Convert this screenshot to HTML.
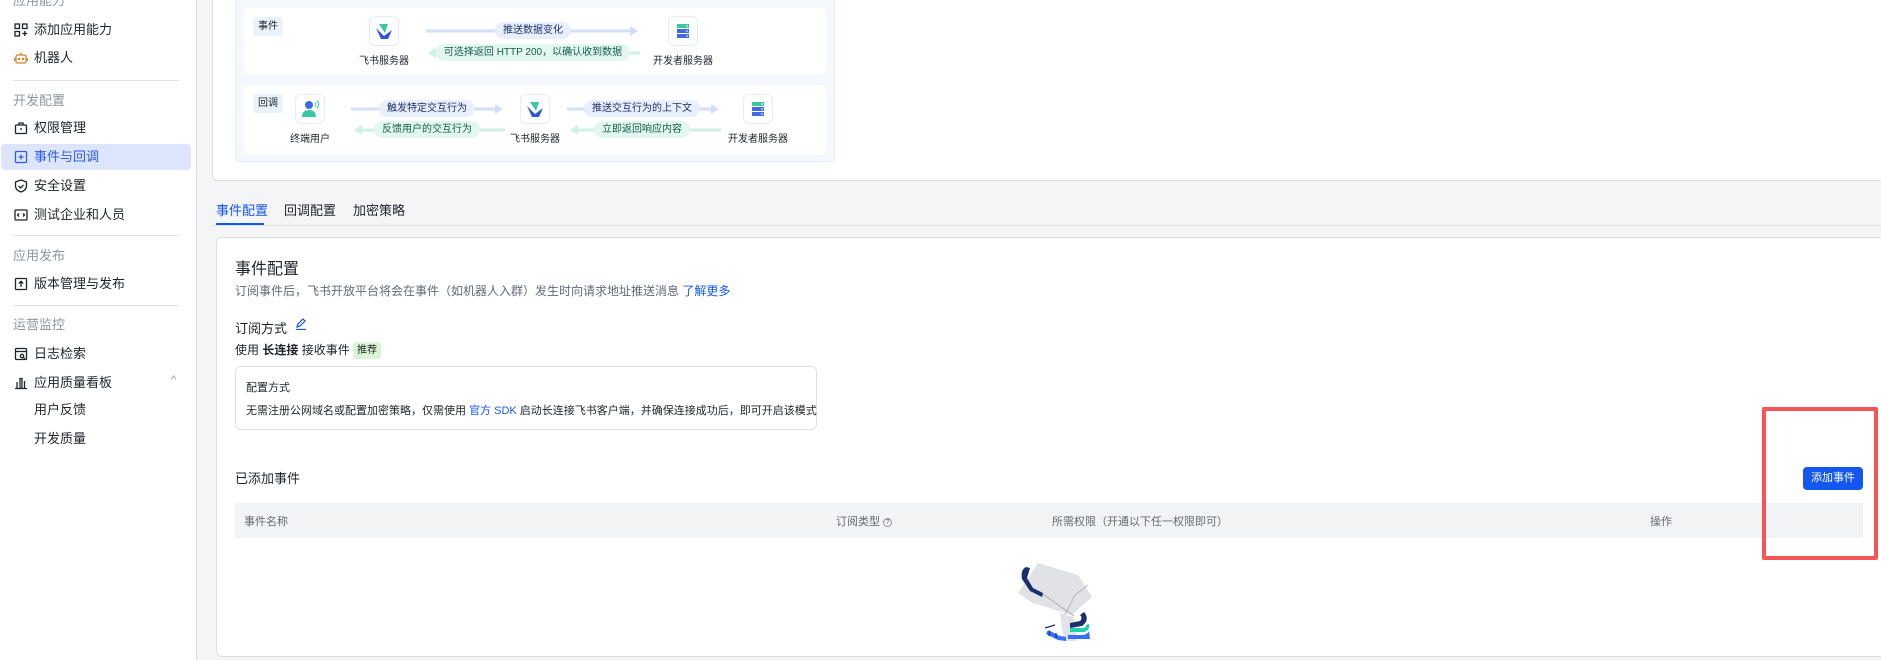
<!DOCTYPE html>
<html><head><meta charset="utf-8"><style>
*{margin:0;padding:0;box-sizing:border-box}
body{width:1881px;height:641px;overflow:hidden;background:#f4f5f7;font-family:"Liberation Sans","Noto Sans CJK SC",sans-serif;color:#1f2329;position:relative;font-size:13px}
.a{position:absolute;white-space:nowrap}
.side{position:absolute;left:0;top:0;width:197px;height:660px;background:#fff;border-right:1px solid #dee0e3}
.si{position:absolute;left:14px;width:180px;height:20px;line-height:20px;font-size:13px;color:#1f2329;white-space:nowrap}
.si svg{position:absolute;left:0;top:3px}
.si span{position:absolute;left:20px;top:0;white-space:nowrap}
.grp{position:absolute;left:13px;font-size:13px;color:#8f959e;white-space:nowrap;line-height:18px}
.sep{position:absolute;left:13px;width:166px;height:1px;background:#dee0e3}
.card{position:absolute;background:#fff;border:1px solid #dee0e3;border-radius:6px}
.lbl{position:absolute;font-size:10px;padding:0 8px;height:17px;line-height:17px;border-radius:9px;white-space:nowrap;transform:translateX(-50%)}
.lb{background:#e8efff;color:#1f2f6b}
.lg{background:#e3f7f1;color:#125c45}
.ic{position:absolute;width:30px;height:30px;background:#fff;border:1px solid #e5ebf8;border-radius:6px;transform:translate(-50%,-50%)}
.cap{position:absolute;font-size:10px;color:#1f2329;transform:translateX(-50%);white-space:nowrap}
.tag{position:absolute;font-size:10px;background:#e9f3fb;color:#1f2329;padding:0 5px;height:19px;line-height:19px;border-radius:3px}
</style></head><body>
<div class="side">
<div class="grp" style="top:-8px">应用能力</div>
<div class="si" style="top:20px"><svg width="14" height="14" viewBox="0 0 14 14" fill="none" stroke="#1f2329" stroke-width="1.3"><rect x="1" y="1" width="4.5" height="4.5"/><rect x="8.5" y="1" width="4.5" height="4.5"/><rect x="1" y="8.5" width="4.5" height="4.5"/><path d="M10.75 8v5M8.3 10.5h5"/></svg><span>添加应用能力</span></div>
<div class="si" style="top:48px"><svg width="14" height="14" viewBox="0 0 14 14" fill="none" stroke="#d4812a" stroke-width="1.3"><rect x="2" y="4" width="10" height="8" rx="1.5"/><path d="M7 1.5v2.5M0.5 7v3M13.5 7v3"/><circle cx="5" cy="8" r=".6" fill="#d4812a"/><circle cx="9" cy="8" r=".6" fill="#d4812a"/></svg><span>机器人</span></div>
<div class="sep" style="top:80px"></div>
<div class="grp" style="top:92px">开发配置</div>
<div class="si" style="top:118px"><svg width="14" height="14" viewBox="0 0 14 14" fill="none" stroke="#1f2329" stroke-width="1.3"><rect x="1.5" y="4" width="11" height="8.5" rx="1"/><path d="M5 4V2h4v2M7 7v2"/></svg><span>权限管理</span></div>
<div style="position:absolute;left:1px;top:144px;width:190px;height:26px;background:#dce5fc;border-radius:4px"></div>
<div class="si" style="top:147px;color:#2e5bec"><svg width="14" height="14" viewBox="0 0 14 14" fill="none" stroke="#2e5bec" stroke-width="1.3"><rect x="1.5" y="1.5" width="11" height="11" rx="1"/><path d="M7 4.5v5M4.5 7h5"/></svg><span>事件与回调</span></div>
<div class="si" style="top:176px"><svg width="14" height="14" viewBox="0 0 14 14" fill="none" stroke="#1f2329" stroke-width="1.3"><path d="M7 1L12.5 3v4c0 3-2.5 5-5.5 6C4 12 1.5 10 1.5 7V3z"/><path d="M4.5 7l2 2 3-3"/></svg><span>安全设置</span></div>
<div class="si" style="top:205px"><svg width="14" height="14" viewBox="0 0 14 14" fill="none" stroke="#1f2329" stroke-width="1.3"><rect x="1" y="2" width="12" height="10" rx="1"/><path d="M5 5.5L3.5 7 5 8.5M9 5.5l1.5 1.5L9 8.5"/></svg><span>测试企业和人员</span></div>
<div class="sep" style="top:235px"></div>
<div class="grp" style="top:247px">应用发布</div>
<div class="si" style="top:274px"><svg width="14" height="14" viewBox="0 0 14 14" fill="none" stroke="#1f2329" stroke-width="1.3"><rect x="1.5" y="1.5" width="11" height="11" rx="1"/><path d="M7 10V4.5M4.8 6.5L7 4.3l2.2 2.2"/></svg><span>版本管理与发布</span></div>
<div class="sep" style="top:305px"></div>
<div class="grp" style="top:316px">运营监控</div>
<div class="si" style="top:344px"><svg width="14" height="14" viewBox="0 0 14 14" fill="none" stroke="#1f2329" stroke-width="1.3"><rect x="1.5" y="1.5" width="11" height="11" rx="1"/><path d="M1.5 4.5h11"/><circle cx="8" cy="9" r="1.7"/><path d="M9.3 10.3l1.5 1.5"/></svg><span>日志检索</span></div>
<div class="si" style="top:373px"><svg width="14" height="14" viewBox="0 0 14 14" fill="none" stroke="#1f2329" stroke-width="1.3"><path d="M1 12.5h12M3 12V6M6 12V2.5h2V12M10.5 12V5"/></svg><span>应用质量看板</span></div>
<div class="a" style="left:171px;top:374px;font-size:11px;color:#8f959e">^</div>
<div class="si" style="top:400px"><span>用户反馈</span></div>
<div class="si" style="top:429px"><span>开发质量</span></div>
</div>

<!-- top card -->
<div class="card" style="left:212px;top:-10px;width:1680px;height:191px"></div>
<div style="position:absolute;left:235px;top:-4px;width:600px;height:166px;background:#f5f9fd;border:1px solid #e8edf3;border-radius:4px"></div>
<div style="position:absolute;left:244px;top:8px;width:582px;height:66px;background:#fff;border-radius:6px"></div>
<div style="position:absolute;left:244px;top:85px;width:582px;height:70px;background:#fff;border-radius:6px"></div>
<div class="tag" style="left:253px;top:17px">事件</div>
<div class="tag" style="left:253px;top:94px">回调</div>

<svg style="position:absolute;left:0;top:0" width="900" height="170">
<defs><marker id="mb" markerUnits="userSpaceOnUse" markerWidth="10" markerHeight="12" refX="2" refY="6" orient="auto"><path d="M0 1L8 6 0 11z" fill="#d3defb"/></marker>
<marker id="mg" markerUnits="userSpaceOnUse" markerWidth="10" markerHeight="12" refX="2" refY="6" orient="auto"><path d="M0 1L8 6 0 11z" fill="#cdf1e4"/></marker></defs>
<g stroke-width="3">
<line x1="426" y1="31" x2="632" y2="31" stroke="#d3defb" marker-end="url(#mb)"/>
<line x1="640" y1="53" x2="434" y2="53" stroke="#cdf1e4" marker-end="url(#mg)"/>
<line x1="351" y1="109" x2="497" y2="109" stroke="#d3defb" marker-end="url(#mb)"/>
<line x1="505" y1="130" x2="360" y2="130" stroke="#cdf1e4" marker-end="url(#mg)"/>
<line x1="567" y1="109" x2="713" y2="109" stroke="#d3defb" marker-end="url(#mb)"/>
<line x1="721" y1="130" x2="576" y2="130" stroke="#cdf1e4" marker-end="url(#mg)"/>
</g></svg>
<div class="lbl lb" style="left:533px;top:22px">推送数据变化</div>
<div class="lbl lg" style="left:533px;top:44px">可选择返回 HTTP 200，以确认收到数据</div>
<div class="lbl lb" style="left:427px;top:100px">触发特定交互行为</div>
<div class="lbl lg" style="left:427px;top:121px">反馈用户的交互行为</div>
<div class="lbl lb" style="left:642px;top:100px">推送交互行为的上下文</div>
<div class="lbl lg" style="left:642px;top:121px">立即返回响应内容</div>

<div class="ic" style="left:384px;top:31px"><svg width="28" height="28" viewBox="0 0 28 28"><path d="M9 7h9l-3 9z" fill="#3bc7a5"/><path d="M6 11l8 8 8-6-4 9H11z" fill="#2d56d6"/></svg></div>
<div class="cap" style="left:384px;top:52px">飞书服务器</div>
<div class="ic" style="left:683px;top:31px"><svg width="28" height="28" viewBox="0 0 28 28"><rect x="8" y="7" width="12" height="4" fill="#3bc7a5"/><rect x="8" y="12" width="12" height="4" fill="#3e6ae5"/><rect x="8" y="17" width="12" height="4" fill="#3e6ae5"/><path d="M17 9h2M17 14h2M17 19h2" stroke="#fff"/></svg></div>
<div class="cap" style="left:683px;top:52px">开发者服务器</div>
<div class="ic" style="left:310px;top:109px"><svg width="28" height="28" viewBox="0 0 28 28"><circle cx="13" cy="10" r="4" fill="#3e6ae5"/><path d="M6 22c0-5 3-7 7-7s7 2 7 7z" fill="#3bc7a5"/><path d="M19 7a4 4 0 010 5M21 5.5a6 6 0 010 8" stroke="#3bc7a5" fill="none"/></svg></div>
<div class="cap" style="left:310px;top:130px">终端用户</div>
<div class="ic" style="left:535px;top:109px"><svg width="28" height="28" viewBox="0 0 28 28"><path d="M9 7h9l-3 9z" fill="#3bc7a5"/><path d="M6 11l8 8 8-6-4 9H11z" fill="#2d56d6"/></svg></div>
<div class="cap" style="left:535px;top:130px">飞书服务器</div>
<div class="ic" style="left:758px;top:109px"><svg width="28" height="28" viewBox="0 0 28 28"><rect x="8" y="7" width="12" height="4" fill="#3bc7a5"/><rect x="8" y="12" width="12" height="4" fill="#3e6ae5"/><rect x="8" y="17" width="12" height="4" fill="#3e6ae5"/><path d="M17 9h2M17 14h2M17 19h2" stroke="#fff"/></svg></div>
<div class="cap" style="left:758px;top:130px">开发者服务器</div>

<!-- tabs -->
<div style="position:absolute;left:212px;top:225px;width:1669px;height:1px;background:#dee0e3"></div>
<div class="a" style="left:216px;top:200px;font-size:13px;color:#1456f0">事件配置</div>
<div style="position:absolute;left:216px;top:223px;width:48px;height:2px;background:#1456f0"></div>
<div class="a" style="left:284px;top:200px;font-size:13px">回调配置</div>
<div class="a" style="left:353px;top:200px;font-size:13px">加密策略</div>

<!-- content card -->
<div class="card" style="left:216px;top:237px;width:1680px;height:420px"></div>
<div class="a" style="left:235px;top:255px;font-size:16px">事件配置</div>
<div class="a" style="left:235px;top:282px;font-size:12px;color:#646a73">订阅事件后，飞书开放平台将会在事件（如机器人入群）发生时向请求地址推送消息 <span style="color:#1456f0">了解更多</span></div>
<div class="a" style="left:235px;top:318px;font-size:13px">订阅方式</div>
<svg style="position:absolute;left:295px;top:318px" width="12" height="12" viewBox="0 0 12 12" fill="none" stroke="#1456f0" stroke-width="1.2"><path d="M2 9l1-3 5-5 2 2-5 5zM1 11.5h10"/></svg>
<div class="a" style="left:235px;top:341px;font-size:12px">使用 <b>长连接</b> 接收事件 <span style="display:inline-block;background:#d9f5d6;color:#1f2329;font-size:10px;padding:0 4px;height:17px;line-height:17px;border-radius:3px;vertical-align:middle">推荐</span></div>
<div style="position:absolute;left:235px;top:366px;width:582px;height:64px;border:1px solid #dee0e3;border-radius:6px;background:#fff"></div>
<div class="a" style="left:246px;top:379px;font-size:11px">配置方式</div>
<div class="a" style="left:246px;top:402px;font-size:11px">无需注册公网域名或配置加密策略，仅需使用 <span style="color:#1456f0">官方 SDK</span> 启动长连接飞书客户端，并确保连接成功后，即可开启该模式</div>
<div class="a" style="left:235px;top:468px;font-size:13px">已添加事件</div>
<div class="a" style="left:1803px;top:467px;width:60px;height:23px;background:#1456f0;border-radius:4px;color:#fff;font-size:11px;text-align:center;line-height:23px">添加事件</div>
<div style="position:absolute;left:235px;top:503px;width:1628px;height:35px;background:#f2f3f5"></div>
<div class="a" style="left:244px;top:513px;font-size:11px;color:#646a73">事件名称</div>
<div class="a" style="left:836px;top:513px;font-size:11px;color:#646a73">订阅类型 <span style="display:inline-block;width:9px;height:9px;border:1px solid #8f959e;border-radius:50%;font-size:7px;line-height:7px;text-align:center;vertical-align:middle">?</span></div>
<div class="a" style="left:1052px;top:513px;font-size:11px;color:#646a73">所需权限（开通以下任一权限即可）</div>
<div class="a" style="left:1650px;top:513px;font-size:11px;color:#646a73">操作</div>
<div style="position:absolute;left:1762px;top:407px;width:116px;height:153px;border:4px solid #f55555;border-radius:2px"></div>

<svg style="position:absolute;left:1000px;top:555px" width="100" height="86" viewBox="0 0 100 86">
<path d="M38 8L78 20 92 42 72 60 33 48 18 38z" fill="#e1e2e5"/>
<path d="M65 60L75 40 88 30M40 37l34 24" stroke="#a9abb0" stroke-width=".8" fill="none"/>
<path d="M60 58l14 4 3 24H64z" fill="#e1e2e5"/>
<path d="M26 12c-4 2-5 6-4 12l8 12 12 6 1-4-10-5-6-10 3-10z" fill="#1a2f6b"/>
<path d="M84 57c4 4 4 10-2 14l-12 2v-5l10-2c2-2 2-4 0-6z" fill="#1a2f6b"/>
<path d="M70 77h14c4-1 6-4 5-8l-3 1c0 2-1 3-3 3H70z" fill="#1fd1b0"/>
<path d="M48 75l12 6 6 1v4l-8-1-12-6zM68 80h14c4 0 6-2 7-4l1 8H68z" fill="#3370ff"/>
<path d="M55 70l-10 3M50 76l-1 5M56 78v5" stroke="#1a2f6b" stroke-width="1.2"/>
</svg>
</body></html>
